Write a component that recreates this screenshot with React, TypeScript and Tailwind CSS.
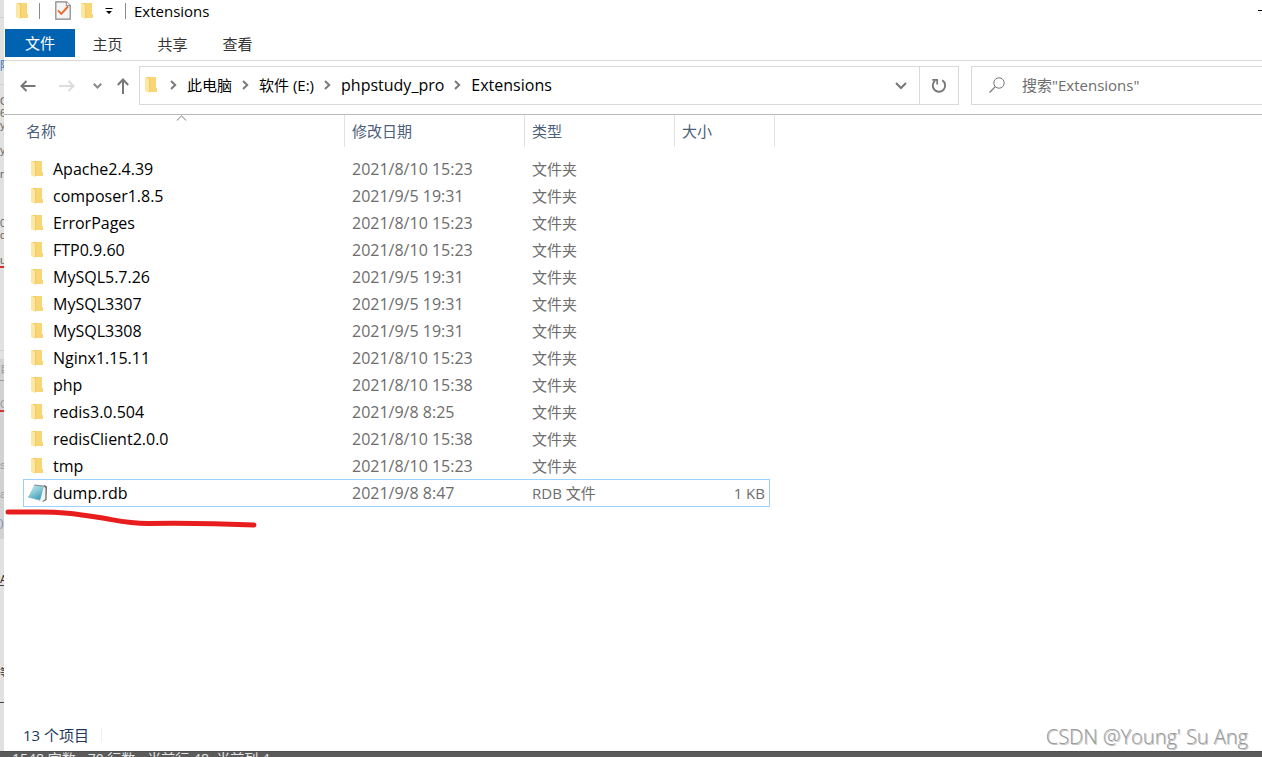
import type { ReactNode } from "react";

type Entry = { name: string; date: string; kind: string; size?: string };

const entries: Entry[] = [
  { name: "Apache2.4.39", date: "2021/8/10 15:23", kind: "文件夹" },
  { name: "composer1.8.5", date: "2021/9/5 19:31", kind: "文件夹" },
  { name: "ErrorPages", date: "2021/8/10 15:23", kind: "文件夹" },
  { name: "FTP0.9.60", date: "2021/8/10 15:23", kind: "文件夹" },
  { name: "MySQL5.7.26", date: "2021/9/5 19:31", kind: "文件夹" },
  { name: "MySQL3307", date: "2021/9/5 19:31", kind: "文件夹" },
  { name: "MySQL3308", date: "2021/9/5 19:31", kind: "文件夹" },
  { name: "Nginx1.15.11", date: "2021/8/10 15:23", kind: "文件夹" },
  { name: "php", date: "2021/8/10 15:38", kind: "文件夹" },
  { name: "redis3.0.504", date: "2021/9/8 8:25", kind: "文件夹" },
  { name: "redisClient2.0.0", date: "2021/8/10 15:38", kind: "文件夹" },
  { name: "tmp", date: "2021/8/10 15:23", kind: "文件夹" },
];

const selected: Entry = { name: "dump.rdb", date: "2021/9/8 8:47", kind: "RDB 文件", size: "1 KB" };

const path = ["此电脑", "软件 (E:)", "phpstudy_pro", "Extensions"];

function Folder() {
  return (
    <svg width="12" height="18" viewBox="0 0 12 18" className="shrink-0" aria-hidden="true">
      <path d="M1 1h10v11l1 .5V16H4z" fill="#efc95c" />
      <path d="M4.600 1H11v11l1 .5V16H4.600z" fill="#f8d675" />
      <path d="M0 1h1l3.600 2v13.500L4 17l-4-2z" fill="#fde7a3" />
      <path d="M4.600 3v13" stroke="#e9c25a" strokeWidth=".7" />
    </svg>
  );
}

function CheckDoc() {
  return (
    <svg width="16" height="19" viewBox="0 0 16 19" aria-hidden="true">
      <path d="M.8.8h10.700l3.700 3.700v13.700H.8z" fill="#f5f5f7" stroke="#858585" strokeWidth="1.200" />
      <path d="M11.300.8v3.900h3.900" fill="#fff" stroke="#858585" />
      <path d="M3 9.300l3.300 3.600L13 5.500" fill="none" stroke="#ee6a24" strokeWidth="1.900" />
    </svg>
  );
}

function Notepad() {
  return (
    <svg width="21" height="19" viewBox="0 0 21 19" aria-hidden="true">
      <defs>
        <linearGradient id="pad" x1="0" y1="0" x2=".6" y2="1">
          <stop offset="0" stopColor="#c9eaf0" />
          <stop offset=".5" stopColor="#8ccbd9" />
          <stop offset="1" stopColor="#3f9db5" />
        </linearGradient>
      </defs>
      <path d="M16 1l3 1.500-.5 13.500-4 2z" fill="#6e6558" />
      <path d="M15.500 2.500l2 1.300-.2 11.500-3.500 2.200-3-1z" fill="#eef3f5" />
      <path d="M6.200 1.200L16 2.200l-4 14L.2 13z" fill="url(#pad)" />
      <path d="M6.200 1.200L16.500 2.200" stroke="#8d9a9f" strokeWidth="1.200" />
      <path d="M.2 13l11.800 3.200" stroke="#7fbccb" />
    </svg>
  );
}

function Stroke({ w, h, d, color, width = 2 }: { w: number; h: number; d: string; color: string; width?: number }) {
  return (
    <svg width={w} height={h} viewBox={`0 0 ${w} ${h}`} className="shrink-0" aria-hidden="true">
      <path d={d} fill="none" stroke={color} strokeWidth={width} />
    </svg>
  );
}

function Crumb({ children }: { children: ReactNode }) {
  return (
    <li className="flex items-center">
      <span className="flex w-[27px] justify-center">
        <Stroke w={7} h={10} d="M1 1l4.200 4L1 9" color="#7a7a7a" />
      </span>
      <a href="#" className="text-black">
        {children}
      </a>
    </li>
  );
}

/* Slivers of the editor page that stays visible behind the window. */
function PageEdge() {
  return (
    <aside
      aria-hidden="true"
      className="w-1 shrink-0 overflow-hidden bg-[#e2e1e1] font-['Liberation_Sans','Noto_Sans_CJK_SC',sans-serif] text-[11px] leading-3 text-[#666]"
    >
      <div className="h-[18px] border-b border-[#cfcfcf]" />
      <div className="mt-[39px] h-[18px] overflow-hidden leading-[18px] text-[#2b6cb0]">除</div>
      <div className="mt-[9px] h-px bg-[#cfcfcf]" />
      <div className="mt-[10px]">C</div>
      <div>6</div>
      <div>y</div>
      <div className="mt-[13px]">y</div>
      <div className="mt-3">n</div>
      <div className="mt-[37px]">0</div>
      <div>d</div>
      <div className="mt-[13px] border-b-2 border-[#d93030]">u</div>
      <div className="mt-[82px] h-px bg-[#cfcfcf]" />
      <div className="mt-2 h-[180px] bg-[#d2d2d2] text-[#999]">
        <div className="border-b border-[#999] leading-[21px]">自</div>
        <div className="mt-[17px] border-b-2 border-[#d93030]">C</div>
        <div className="mt-[47px]">s</div>
        <div className="mt-[17px]">a</div>
        <div className="mt-[17px] text-[#7a86b8]">)</div>
      </div>
      <div className="mt-[34px] border-b border-[#444] text-[#333]">A</div>
      <div className="mt-[78px] leading-[18px] text-[#333]">等</div>
      <div className="mt-5 h-px bg-[#444]" />
    </aside>
  );
}

export default function App() {
  return (
    <div className="relative flex min-h-screen flex-col overflow-hidden bg-[#5b5b5b] font-['Open_Sans','Noto_Sans_CJK_SC',sans-serif] text-[15px] leading-5 text-black">
      <div className="flex flex-1">
        <PageEdge />
        <main className="flex min-w-0 flex-1 flex-col bg-white">
          <header className="flex h-[29px] items-start justify-between">
            <div className="flex h-[21px] items-center pl-3">
              <Folder />
              <span className="ml-[11px] h-4 w-px bg-[#8a8a8a]" />
              <button aria-label="属性" className="ml-[15px]">
                <CheckDoc />
              </button>
              <button aria-label="新建文件夹" className="ml-[10px]">
                <Folder />
              </button>
              <button aria-label="自定义快速访问工具栏" className="ml-3">
                <svg width="8" height="8" viewBox="0 0 8 8" aria-hidden="true">
                  <path d="M0 1.500h8M1 4h6L4 7z" fill="#000" />
                  <path d="M.5 1.500h7" stroke="#000" />
                </svg>
              </button>
              <span className="ml-3 h-4 w-px bg-[#8a8a8a]" />
              <h1 className="ml-2">Extensions</h1>
            </div>
            <button aria-label="最小化" className="flex h-5 w-1 items-center">
              <span className="h-px w-full bg-black" />
            </button>
          </header>

          <nav aria-label="功能区" className="flex h-8 items-start border-b border-[#d9d9d9] pl-px text-[#333]">
            <button className="h-7 w-[70px] bg-[#0063b1] text-white">文件</button>
            <button className="h-7 w-[65px] pt-0.5">主页</button>
            <button className="h-7 w-[65px] pt-0.5">共享</button>
            <button className="h-7 w-[65px] pt-0.5">查看</button>
          </nav>

          <div className="flex items-center border-b border-[#b9b9b9] pt-[5px] pb-[9px]">
            <div className="flex w-[135px] items-center pl-4">
              <button aria-label="后退">
                <Stroke w={16} h={12} d="M15.500 6H1.500M6.500 1l-5 5 5 5" color="#777" />
              </button>
              <button aria-label="前进" className="ml-[23px]">
                <Stroke w={16} h={12} d="M0 6h14.500M9.500 1l5 5-5 5" color="#dcdcdc" />
              </button>
              <button aria-label="最近位置" className="ml-[18px]">
                <Stroke w={9} h={6} d="M.7.7l3.800 3.800L8.300.7" color="#8a8a8a" />
              </button>
              <button aria-label="上移" className="ml-[15px]">
                <Stroke w={12} h={16} d="M6 16V1.500M.8 7L6 1.500 11.200 7" color="#777" />
              </button>
            </div>
            <div className="flex h-[39px] min-w-0 flex-1 border border-[#d9d9d9]">
              <div className="flex flex-1 items-center pb-0.5 pl-[5px]">
                <Folder />
                <ol className="flex items-center pl-[3px]">
                  {path.map((part) => (
                    <Crumb key={part}>
                      <span className={part === "phpstudy_pro" || part === "Extensions" ? "text-[16px]" : ""}>{part}</span>
                    </Crumb>
                  ))}
                </ol>
              </div>
              <button aria-label="以前的位置" className="flex w-9 items-center justify-center">
                <Stroke w={12} h={8} d="M1 1l5 5 5-5" color="#777" />
              </button>
              <button aria-label="刷新" className="flex w-[39px] items-center justify-center border-l border-[#d9d9d9]">
                <svg width="16" height="16" viewBox="0 0 16 16" aria-hidden="true">
                  <path d="M11.200 2.300a6.200 6.200 0 1 1-7.200.5" fill="none" stroke="#777" strokeWidth="1.900" />
                  <path d="M1.300 1.900h4.900v4.600" fill="none" stroke="#777" strokeWidth="1.700" />
                </svg>
              </button>
            </div>
            <label className="ml-3 flex h-[39px] w-[291px] items-center border border-r-0 border-[#d9d9d9] pb-0.5 pl-[17px]">
              <svg width="16" height="16" viewBox="0 0 16 16" aria-hidden="true">
                <circle cx="10" cy="6" r="5.200" fill="none" stroke="#777" />
                <path d="M6.300 9.700L.5 15.500" stroke="#777" strokeWidth="1.200" />
              </svg>
              <input
                type="search"
                aria-label="搜索"
                placeholder={'搜索"Extensions"'}
                className="ml-[17px] min-w-0 flex-1 bg-transparent outline-none placeholder:text-[#6d6d6d]"
              />
            </label>
          </div>

          <div className="flex-1 pl-[19px]">
            <table className="w-[752px] table-fixed border-separate border-spacing-0 text-left text-[#6d6d6d]">
              <colgroup>
                <col className="w-[322px]" />
                <col className="w-[180px]" />
                <col className="w-[150px]" />
                <col className="w-[95px]" />
                <col className="w-[5px]" />
              </colgroup>
              <thead className="text-[#4c607a]">
                <tr className="h-8">
                  <th className="relative border-r border-[#e2e2e2] p-0 pl-[3px] font-normal">
                    名称
                    <span className="absolute top-0 left-[153px] flex">
                      <Stroke w={11} h={6} d="M.8 5.500l4.700-4.500 4.700 4.500" color="#777" width={1} />
                    </span>
                  </th>
                  <th className="border-r border-[#e2e2e2] p-0 pl-[7px] font-normal">修改日期</th>
                  <th className="border-r border-[#e2e2e2] p-0 pl-[7px] font-normal">类型</th>
                  <th colSpan={2} className="border-r border-[#e2e2e2] p-0 pl-[7px] font-normal">
                    大小
                  </th>
                </tr>
              </thead>
              <tbody>
                <tr className="h-2">
                  <td colSpan={5} className="p-0" />
                </tr>
                {entries.map((e) => (
                  <tr key={e.name} className="h-[27px]">
                    <td className="p-0 pl-2 text-[16px]">
                      <span className="flex items-center gap-[10px] text-black">
                        <Folder />
                        {e.name}
                      </span>
                    </td>
                    <td className="p-0 pl-[7px] text-[16px]">{e.date}</td>
                    <td className="p-0 pl-[7px]">{e.kind}</td>
                    <td className="p-0" />
                    <td className="p-0" />
                  </tr>
                ))}
                <tr className="h-7">
                  <td className="border-y border-l border-[#99d1ff] p-0 pl-1 text-[16px]">
                    <span className="flex items-center gap-1 text-black">
                      <Notepad />
                      {selected.name}
                    </span>
                  </td>
                  <td className="border-y border-[#99d1ff] p-0 pl-[7px] text-[16px]">{selected.date}</td>
                  <td className="border-y border-[#99d1ff] p-0 pl-[7px]">{selected.kind}</td>
                  <td className="border-y border-r border-[#99d1ff] p-0 pr-1 text-right">{selected.size}</td>
                  <td className="p-0" />
                </tr>
              </tbody>
            </table>
          </div>

          <footer className="flex h-8 items-center pl-[19px] text-[#1e395b]">
            <span>13 个项目</span>
            <span className="ml-3 h-[14px] w-px bg-[#f0f0f0]" />
          </footer>
        </main>
      </div>
      <div className="flex h-1.5 gap-3 overflow-hidden border-t border-[#505050] pt-px pl-3 text-[14px] leading-3 text-[#e6e6e6]">
        <span>1548 字数</span>
        <span>70 行数</span>
        <span>当前行 48, 当前列 4</span>
      </div>

      <svg className="pointer-events-none absolute top-[505px] left-0" width="264" height="26" viewBox="0 0 264 26" aria-hidden="true">
        <path
          d="M8 7H38C62 7 74 8.500 96 12C116 15 126 18.500 148 18.500C184 18 206 18 254 20"
          fill="none"
          stroke="#e81e1e"
          strokeWidth="5"
          strokeLinecap="round"
          strokeLinejoin="round"
        />
      </svg>
      <p className="pointer-events-none absolute right-[14px] bottom-1.5 font-['Open_Sans','Noto_Sans',sans-serif] text-[20px] leading-7 font-light text-[#9a9a9a] [text-shadow:1px_1px_0_#c4c4c4]">
        CSDN @Young' Su Ang
      </p>
    </div>
  );
}
